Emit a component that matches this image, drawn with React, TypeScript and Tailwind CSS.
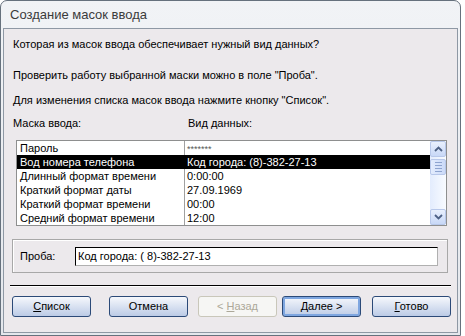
import React from 'react'

const rows = [
  { mask: 'Пароль', data: '*******' },
  { mask: 'Вод номера телефона', data: 'Код города: (8)-382-27-13' },
  { mask: 'Длинный формат времени', data: '0:00:00' },
  { mask: 'Краткий формат даты', data: '27.09.1969' },
  { mask: 'Краткий формат времени', data: '00:00' },
  { mask: 'Средний формат времени', data: '12:00' },
]

const selected = 1

function Arrow({ up }: { up?: boolean }) {
  return (
    <svg width="9" height="6" viewBox="0 0 9 6">
      <path
        d={up ? 'M1 5 L4.5 1.5 L8 5' : 'M1 1 L4.5 4.5 L8 1'}
        fill="none"
        stroke="#4d6185"
        strokeWidth="1.8"
      />
    </svg>
  )
}

function ScrollButton({ up }: { up?: boolean }) {
  return (
    <div className="h-[16px] w-[16px] flex items-center justify-center rounded-[2px] border border-[#b8c8ea] bg-gradient-to-b from-[#e9f0fd] to-[#c8d8f7]">
      <Arrow up={up} />
    </div>
  )
}

function Button({
  label,
  hot,
  before = '',
  after = '',
  disabled,
  isDefault,
}: {
  label: string
  hot: string
  before?: string
  after?: string
  disabled?: boolean
  isDefault?: boolean
}) {
  const base = 'h-[21px] w-[79px] flex items-center justify-center rounded-[3px] text-[11px]'
  const look = disabled
    ? 'border border-[#c9c7ba] bg-[#f6f6f4] text-[#aca899]'
    : isDefault
      ? 'border border-[#2c4a78] bg-gradient-to-b from-[#f6f8fc] to-[#bccbe6] text-black shadow-[inset_0_0_0_2px_#7ea6e0]'
      : 'border border-[#2c4a78] bg-gradient-to-b from-[#f6f8fc] to-[#bccbe6] text-black'
  return (
    <div className={`${base} ${look}`}>
      <span>
        {before}
        <span className="underline underline-offset-[1px]">{hot}</span>
        {label}
        {after}
      </span>
    </div>
  )
}

export default function App() {
  return (
    <div
      className="w-[465px] h-[336px] bg-white flex"
      style={{ fontFamily: '"Liberation Sans", Arial, sans-serif' }}
    >
      <div className="w-[461px] h-[336px] flex flex-col border border-[#66717d] rounded-t-[7px] bg-gradient-to-b from-[#f1f3f6] to-[#e4e7ec] overflow-hidden">
        {/* Title */}
        <div className="h-[27px] shrink-0 flex items-center pl-[9px] text-[13px] text-[#3b3b3b]">
          Создание масок ввода
        </div>

        {/* Body */}
        <div className="flex-1 mx-[2px] mb-[2px] border border-[#8e98a4] bg-[#ece9ec] flex flex-col pl-[9px] text-[11px] text-black">
          <div className="mt-[8px] leading-[14px]">Которая из масок ввода обеспечивает нужный вид данных?</div>
          <div className="mt-[17px] leading-[14px]">Проверить работу выбранной маски можно в поле "Проба".</div>
          <div className="mt-[11px] leading-[14px]">Для изменения списка масок ввода нажмите кнопку "Список".</div>
          <div className="mt-[9px] leading-[14px] flex">
            <span className="w-[175px]">Маска ввода:</span>
            <span>Вид данных:</span>
          </div>

          {/* List */}
          <div className="mt-[10px] ml-[3px] w-[431px] h-[86px] border border-[#8e8f8f] bg-white flex">
            <div className="flex-1 flex flex-col">
              {rows.map((r, i) => (
                <div
                  key={r.mask}
                  className={`h-[14px] flex leading-[14px] ${i === selected ? 'bg-black text-white' : 'text-black'}`}
                >
                  <span className="w-[167px] pl-[3px] whitespace-nowrap">{r.mask}</span>
                  <span className={`w-px ${i === selected ? 'bg-black' : 'bg-[#a0a0a0]'}`} />
                  <span className="pl-[2px] whitespace-nowrap">
                    {r.data === '*******' ? <span className="text-[9px] tracking-[0px] text-[#555]">*******</span> : r.data}
                  </span>
                </div>
              ))}
            </div>
            <div className="w-[16px] flex flex-col bg-gradient-to-r from-[#e3ecfd] to-[#f8fbff]">
              <ScrollButton up />
              <div className="mt-[2px] h-[16px] w-[16px] flex flex-col items-center justify-center gap-[2px] rounded-[2px] border border-[#b8c8ea] bg-gradient-to-r from-[#e3ecfd] to-[#cbdaf8]">
                <span className="w-[7px] h-px bg-[#8ea4cf]" />
                <span className="w-[7px] h-px bg-[#8ea4cf]" />
                <span className="w-[7px] h-px bg-[#8ea4cf]" />
                <span className="w-[7px] h-px bg-[#8ea4cf]" />
              </div>
              <div className="flex-1" />
              <ScrollButton />
            </div>
          </div>

          {/* Probe group */}
          <div className="mt-[13px] ml-[-1px] w-[436px] h-[34px] border border-[#a8a8a8] shadow-[inset_1px_1px_0_#ffffff] flex items-center">
            <span className="w-[62px] pl-[7px]">Проба:</span>
            <div className="w-[363px] h-[19px] border border-[#b0b0b0] border-t-black border-l-black bg-white flex items-center pl-[2px] leading-[14px]">
              Код города: ( 8)-382-27-13
            </div>
          </div>

          {/* Separator */}
          <div className="mt-[12px] ml-[-3px] w-[441px] border-t border-black border-b border-b-white" />

          {/* Buttons */}
          <div className="mt-[9px] ml-[-1px] flex">
            <Button hot="С" label="писок" />
            <div className="w-[18px]" />
            <Button hot="" label="Отмена" />
            <div className="w-[10px]" />
            <Button before="< " hot="Н" label="азад" disabled />
            <div className="w-[5px]" />
            <Button hot="Д" label="алее" after=" >" isDefault />
            <div className="w-[11px]" />
            <Button hot="Г" label="отово" />
          </div>
        </div>
      </div>
    </div>
  )
}
